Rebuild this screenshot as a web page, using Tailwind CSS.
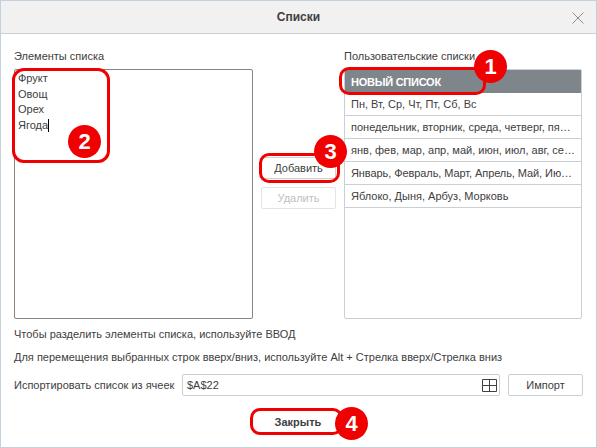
<!DOCTYPE html>
<html lang="ru">
<head>
  <meta charset="UTF-8">
  <title>Списки</title>
  <script src="https://cdn.jsdelivr.net/npm/@tailwindcss/browser@4"></script>
</head>
<body class="bg-white font-['Liberation_Sans',sans-serif] text-[11px] leading-[16px] text-[#404040]">
  <div class="relative w-[597px] h-[448px] overflow-hidden">
    <div class="w-full h-full flex flex-col border border-[#c4d0dc] bg-white">
      <!-- Header -->
      <div class="h-[33px] shrink-0 relative flex items-center justify-center bg-[#f1f1f1] border-b border-[#cbcfd4]">
        <span class="text-[12px] font-bold">Списки</span>
        <svg class="absolute right-[12px] top-[11px] w-[12px] h-[12px]" viewBox="0 0 12 12" fill="none" stroke="#8f8f8f" stroke-width="1"><path d="M0.5 0.5L11.5 11.5M11.5 0.5L0.5 11.5"/></svg>
      </div>

      <!-- Body -->
      <div class="flex-1 flex flex-col pl-[13px] pr-[14px] pt-[14px]">
        <div class="flex">
          <div class="w-[239px] shrink-0">
            <div class="h-[21px]">Элементы списка</div>
            <div class="h-[250px] border border-[#848484] rounded-[2px] pl-[3px]">
              <div class="h-[16px]">Фрукт</div>
              <div class="h-[15px]">Овощ</div>
              <div class="h-[16px]">Орех</div>
              <div class="h-[16px] flex items-center">Ягода<span class="w-px h-[13px] bg-black"></span></div>
            </div>
          </div>
          <div class="w-[91px] shrink-0 flex flex-col items-center pt-[109px]">
            <button class="w-[75px] h-[22px] border border-[#d0d0d0] rounded-[2px]">Добавить</button>
            <button class="w-[75px] h-[22px] mt-[8px] border border-[#e4e4e4] rounded-[2px] text-[#c0c0c0]">Удалить</button>
          </div>
          <div class="w-[238px] shrink-0">
            <div class="h-[21px]">Пользовательские списки</div>
            <div class="h-[250px] border border-[#cbcfd4] rounded-[2px] whitespace-nowrap">
              <div class="h-[23px] flex items-center px-[6px] bg-[#7f868b] text-white font-bold tracking-[-0.25px]">НОВЫЙ СПИСОК</div>
              <div class="h-[23px] flex items-center px-[6px] border-b border-[#cbcfd4]">Пн, Вт, Ср, Чт, Пт, Сб, Вс</div>
              <div class="h-[23px] flex items-center px-[6px] border-b border-[#cbcfd4]">понедельник, вторник, среда, четверг, пя…</div>
              <div class="h-[23px] flex items-center px-[6px] border-b border-[#cbcfd4]">янв, фев, мар, апр, май, июн, июл, авг, се…</div>
              <div class="h-[23px] flex items-center px-[6px] border-b border-[#cbcfd4] tracking-[-0.08px]">Январь, Февраль, Март, Апрель, Май, Ию…</div>
              <div class="h-[23px] flex items-center px-[6px] border-b border-[#cbcfd4]">Яблоко, Дыня, Арбуз, Морковь</div>
            </div>
          </div>
        </div>

        <div class="mt-[7px] h-[16px]">Чтобы разделить элементы списка, используйте ВВОД</div>
        <div class="mt-[7px] h-[16px]">Для перемещения выбранных строк вверх/вниз, используйте Alt + Стрелка вверх/Стрелка вниз</div>

        <div class="mt-[9px] flex items-center h-[22px]">
          <span class="w-[168px] shrink-0">Испортировать список из ячеек</span>
          <div class="w-[318px] h-[22px] shrink-0 border border-[#cbcfd4] rounded-[2px] flex items-center justify-between pl-[4px] pr-[2px]">
            <span>$A$22</span>
            <svg class="w-[15px] h-[13px]" viewBox="0 0 15 13" fill="none" stroke="#404040" stroke-width="1"><path d="M0.5 0.5H14.5V12.5H0.5ZM7.5 0.5V12.5M0.5 6.5H14.5"/></svg>
          </div>
          <button class="ml-[8px] w-[75px] h-[22px] shrink-0 border border-[#cbcfd4] rounded-[2px]">Импорт</button>
        </div>

        <div class="mt-[15px] flex justify-center">
          <button class="w-[66px] h-[22px] font-bold">Закрыть</button>
        </div>
      </div>
    </div>

    <!-- Annotations -->
    <div class="absolute left-[12px] top-[68px] w-[98px] h-[95px] border-[3px] border-[#f00000] rounded-[12px]"></div>
    <div class="absolute left-[339px] top-[67px] w-[147px] h-[28px] border-[3px] border-[#f00000] rounded-[10px]"></div>
    <div class="absolute left-[259px] top-[153px] w-[81px] h-[30px] border-[3px] border-[#f00000] rounded-[10px]"></div>
    <div class="absolute left-[250px] top-[408px] w-[93px] h-[27px] border-[3px] border-[#f00000] rounded-[10px]"></div>

    <div class="absolute left-[474px] top-[50px] w-[33px] h-[33px] rounded-full bg-[#f00000] flex items-center justify-center text-white text-[22px] font-bold">1</div>
    <div class="absolute left-[68px] top-[125px] w-[33px] h-[33px] rounded-full bg-[#f00000] flex items-center justify-center text-white text-[22px] font-bold">2</div>
    <div class="absolute left-[314px] top-[135px] w-[33px] h-[33px] rounded-full bg-[#f00000] flex items-center justify-center text-white text-[22px] font-bold">3</div>
    <div class="absolute left-[335px] top-[407px] w-[33px] h-[33px] rounded-full bg-[#f00000] flex items-center justify-center text-white text-[22px] font-bold">4</div>
  </div>
</body>
</html>
